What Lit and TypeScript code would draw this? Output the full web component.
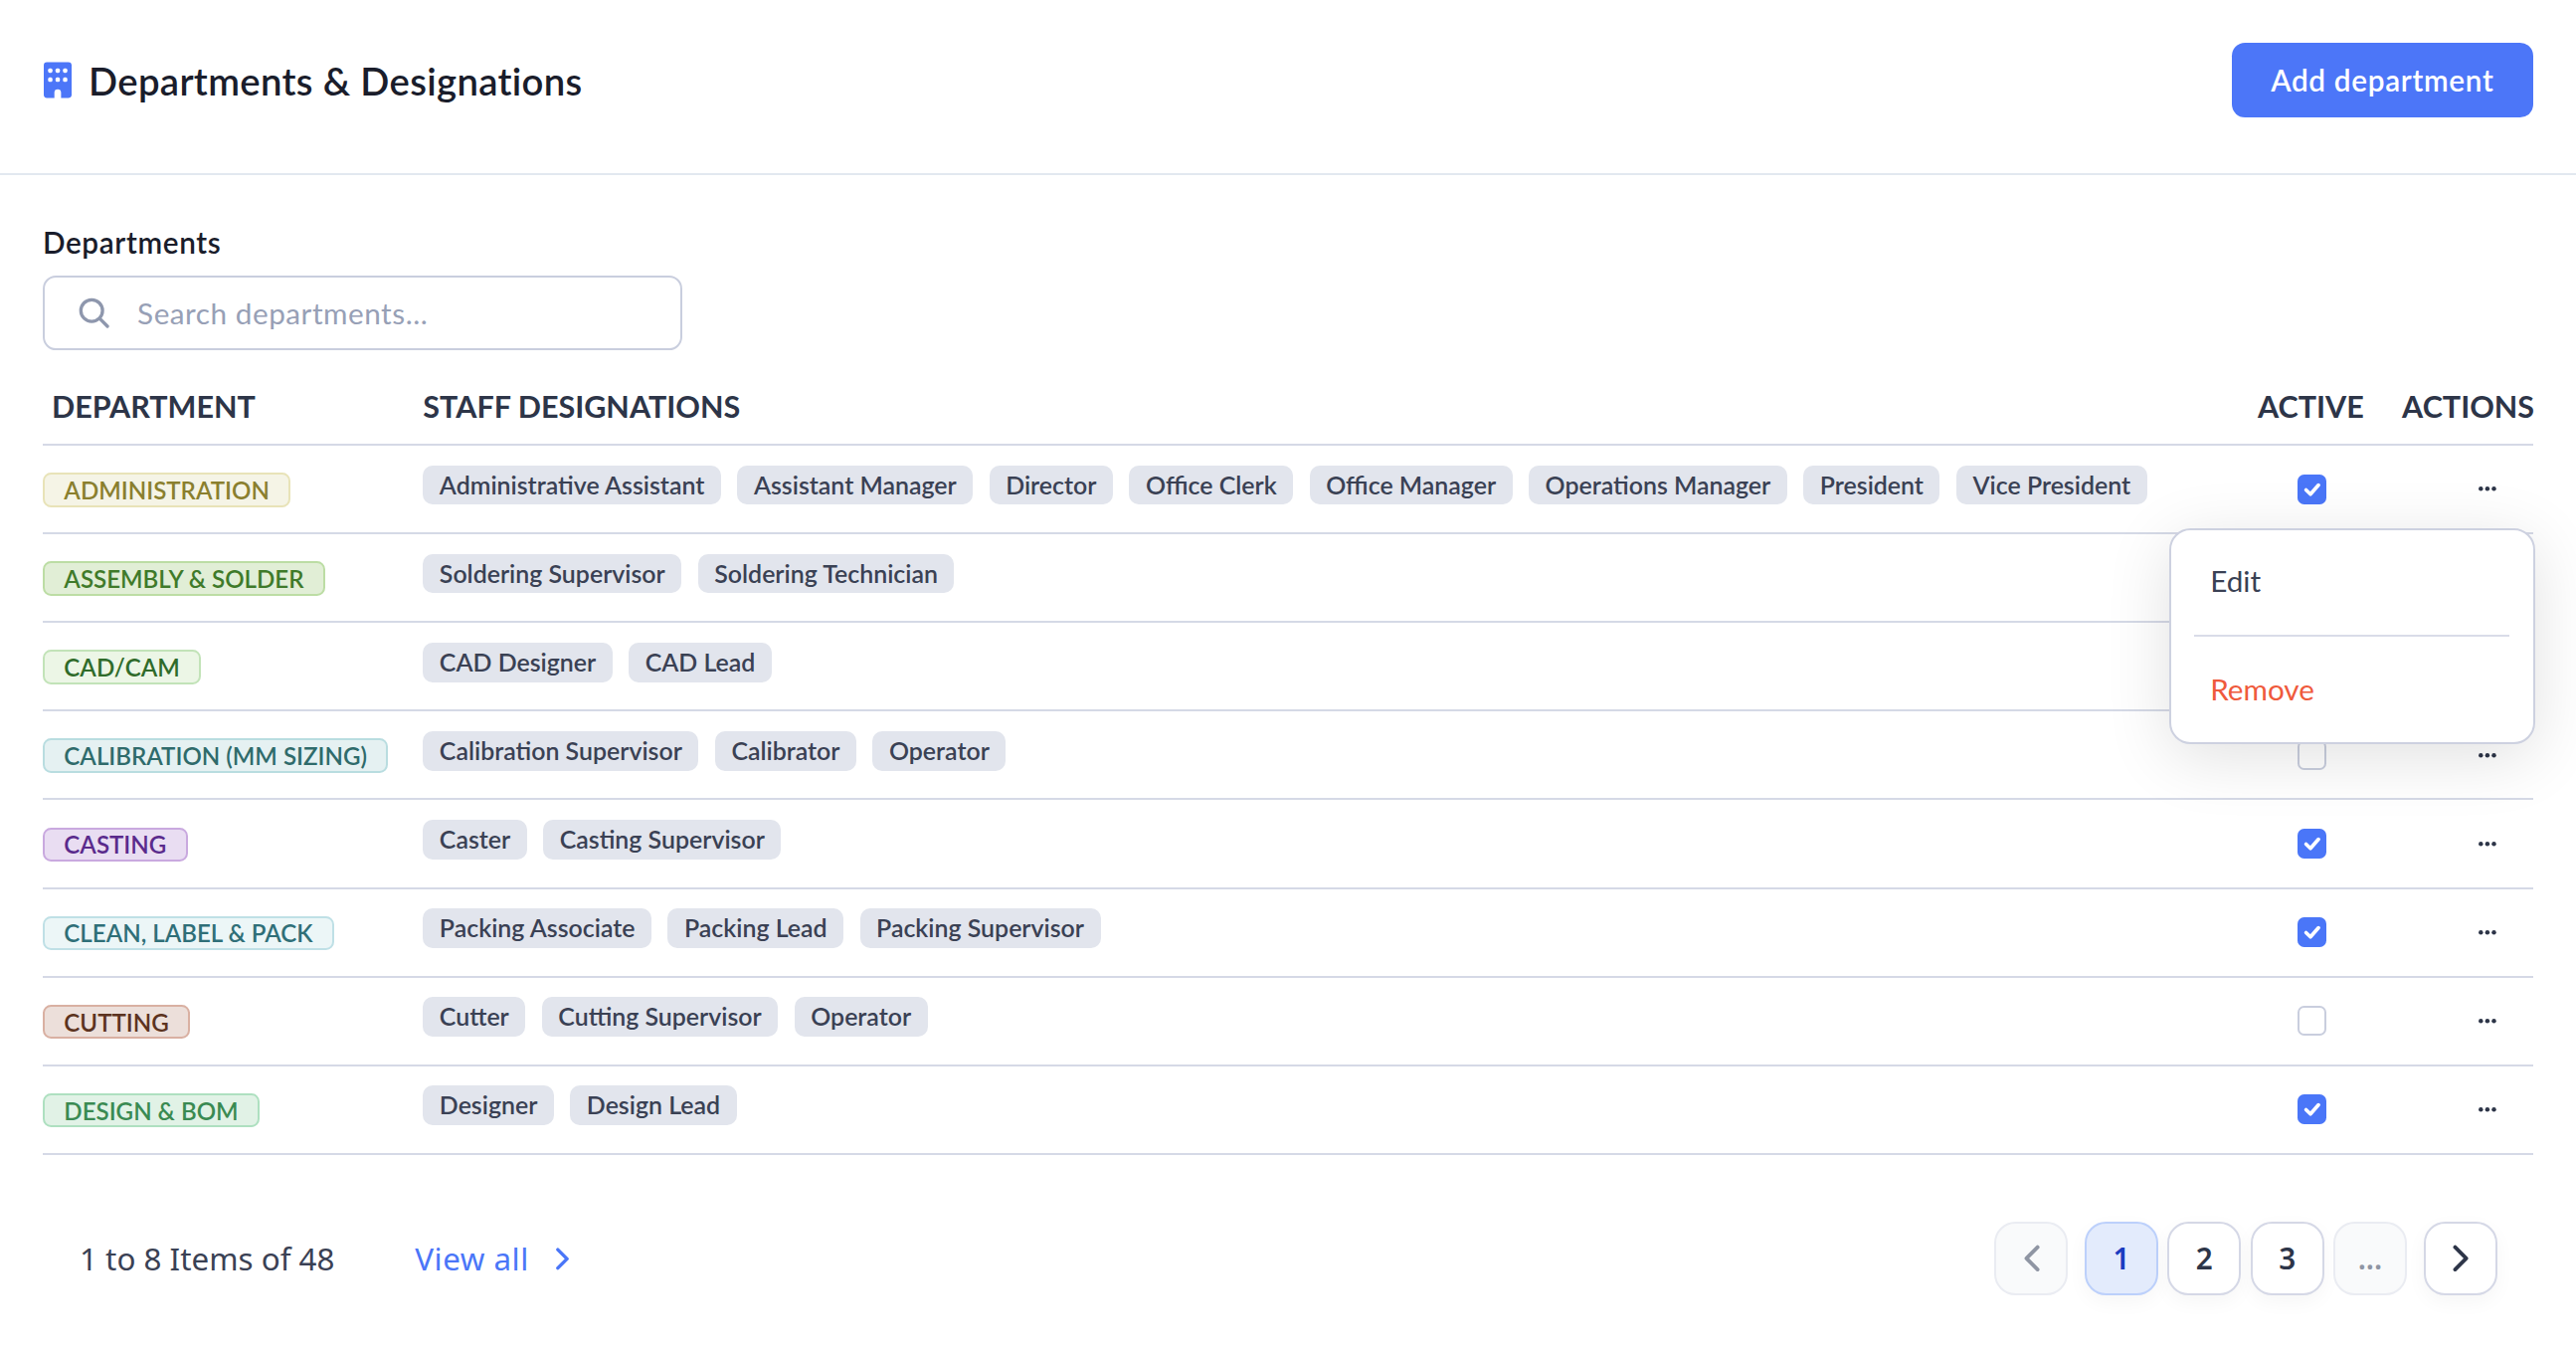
import { LitElement, css, html, nothing } from "lit";
import { customElement } from "lit/decorators.js";

interface Department {
  name: string;
  tone: string;
  staff: string[];
  active: boolean;
}

const departments: Department[] = [
  {
    name: "ADMINISTRATION",
    tone: "olive",
    active: true,
    staff: [
      "Administrative Assistant",
      "Assistant Manager",
      "Director",
      "Office Clerk",
      "Office Manager",
      "Operations Manager",
      "President",
      "Vice President",
    ],
  },
  { name: "ASSEMBLY & SOLDER", tone: "green", active: true, staff: ["Soldering Supervisor", "Soldering Technician"] },
  { name: "CAD/CAM", tone: "lime", active: true, staff: ["CAD Designer", "CAD Lead"] },
  { name: "CALIBRATION (MM SIZING)", tone: "teal", active: false, staff: ["Calibration Supervisor", "Calibrator", "Operator"] },
  { name: "CASTING", tone: "purple", active: true, staff: ["Caster", "Casting Supervisor"] },
  { name: "CLEAN, LABEL & PACK", tone: "cyan", active: true, staff: ["Packing Associate", "Packing Lead", "Packing Supervisor"] },
  { name: "CUTTING", tone: "brown", active: false, staff: ["Cutter", "Cutting Supervisor", "Operator"] },
  { name: "DESIGN & BOM", tone: "mint", active: true, staff: ["Designer", "Design Lead"] },
];

@customElement("app-root")
export class AppRoot extends LitElement {
  static styles = css`
    :host {
      display: block;
      zoom: 1.65;
      width: 1569.7px;
      height: 824px;
      background: #fff;
      color: #3a4154;
      font-family: Lato, "Noto Sans", sans-serif;
      overflow: hidden;
    }
    .top {
      height: 106.4px;
      border-bottom: 1.25px solid #e2e8f0;
      display: flex;
      align-items: center;
      justify-content: space-between;
      padding: 0 26px 7.5px 26px;
      box-sizing: border-box;
    }
    .title {
      display: flex;
      align-items: center;
      gap: 10.4px;
      padding-left: 0.6px;
      font-size: 23.2px;
      font-weight: 600;
      letter-spacing: 0.2px;
      color: #1a1d2b;
    }
    .title svg {
      width: 17px;
      height: 22.4px;
    }
    .add {
      width: 184px;
      height: 45px;
      border: 0;
      border-radius: 8px;
      background: #4c76f8;
      color: #fff;
      font: 600 18px Lato, sans-serif;
      letter-spacing: 0.42px;
    }
    .body {
      padding: 28.6px 26px 0 26px;
      position: relative;
    }
    .label {
      font-size: 18px;
      font-weight: 600;
      letter-spacing: 0.4px;
      color: #1a1d2b;
      line-height: 26px;
    }
    .search {
      margin-top: 7px;
      width: 390px;
      height: 45.4px;
      box-sizing: border-box;
      border: 1.25px solid #c9cede;
      border-radius: 8px;
      display: flex;
      align-items: center;
      gap: 17px;
      padding-left: 20.5px;
      color: #97a0b6;
      font-size: 18px;
      letter-spacing: 0.32px;
    }
    .search svg {
      width: 19px;
      height: 19px;
    }
    .grid {
      display: grid;
      grid-template-columns: 231.8px 1fr 88px 80px;
      align-items: center;
    }
    .head {
      height: 58.2px;
      padding-top: 11px;
      border-bottom: 1.25px solid #d5d9e6;
      font-size: 18.5px;
      font-weight: 700;
      color: #2d3548;
      box-sizing: border-box;
    }
    .head .first {
      padding-left: 5.5px;
    }
    .row {
      height: 54px;
      box-sizing: border-box;
      border-bottom: 1.25px solid #d5d9e6;
    }
    .row:last-of-type {
      border-bottom-color: #e2e8f0;
    }
    .pill {
      display: inline-flex;
      align-items: center;
      height: 21px;
      box-sizing: border-box;
      padding: 0 11.8px;
      border: 1.25px solid;
      border-radius: 5px;
      font-size: 14.6px;
      font-weight: 600;
      white-space: nowrap;
      position: relative;
      top: 0.5px;
    }
    .olive { color: #8a7f2e; background: #f5f4e6; border-color: #e8e3b8; }
    .green { color: #3f7a2a; background: #e1eed6; border-color: #bcdda4; }
    .lime { color: #2f6b2a; background: #ecf6e6; border-color: #c2e3b8; }
    .teal { color: #2f6b6b; background: #e5f1f2; border-color: #b9dde0; }
    .purple { color: #5a2a8c; background: #e9ddf2; border-color: #c9a9df; }
    .cyan { color: #2f6f78; background: #ecf6f7; border-color: #bfe0e6; }
    .brown { color: #5c3320; background: #ecdfda; border-color: #d9b0a2; }
    .mint { color: #3a8a52; background: #e1f2e6; border-color: #aee0c0; }
    .tags {
      display: flex;
      gap: 10px;
      padding-bottom: 5px;
    }
    .tag {
      height: 24px;
      line-height: 23.6px;
      padding: 0 10px;
      border-radius: 6px;
      background: #e2e5ed;
      color: #3a4154;
      font-size: 15.1px;
      font-weight: 600;
      white-space: nowrap;
    }
    .check-cell {
      width: 66px;
      display: flex;
      justify-content: center;
    }
    .check {
      width: 18px;
      height: 18px;
      box-sizing: border-box;
      border-radius: 4px;
      border: 1.25px solid #c9cede;
      background: #fff;
      display: flex;
    }
    .check.on {
      background: #4a76f8;
      border: 0;
    }
    .check svg {
      width: 100%;
      height: 100%;
    }
    .dots {
      display: flex;
      justify-content: flex-end;
      padding-right: 22px;
    }
    .dots svg {
      width: 12px;
      height: 4px;
    }
    .menu {
      position: absolute;
      left: 1321.6px;
      top: 215.4px;
      width: 223px;
      height: 131.6px;
      box-sizing: border-box;
      background: #fff;
      border: 1.25px solid #cdd1e0;
      border-radius: 13px;
      box-shadow: 0 8px 40px rgba(0, 0, 0, 0.12);
      font-size: 18px;
      padding: 0 14px;
    }
    .menu div {
      display: flex;
      align-items: center;
      padding-left: 10px;
    }
    .menu .edit {
      height: 65px;
      padding-bottom: 2px;
      box-sizing: border-box;
      border-bottom: 1.25px solid #d9dce8;
    }
    .menu .remove {
      height: 63px;
      color: #ef5a3c;
    }
    .foot {
      margin-top: 40.4px;
      display: flex;
      align-items: center;
      padding: 0 48px 0 48.5px;
      font-family: "Noto Sans", sans-serif;
      font-size: 19px;
    }
    .view {
      margin-left: 49px;
      display: flex;
      align-items: center;
      gap: 16px;
      color: #4a76f8;
      letter-spacing: 0.3px;
    }
    .view svg {
      width: 9.5px;
      height: 15px;
      stroke-width: 2.4;
    }
    .pages {
      margin-left: auto;
      display: flex;
      gap: 5.5px;
    }
    .page {
      width: 45px;
      height: 45.4px;
      box-sizing: border-box;
      display: flex;
      align-items: center;
      justify-content: center;
      border: 1.25px solid #d5d8e6;
      border-radius: 13px;
      color: #2d3548;
      font-size: 18px;
      font-weight: 600;
      background: #fff;
      box-shadow: 0 4px 12px rgba(0, 0, 0, 0.04);
    }
    .page svg {
      width: 11.5px;
      height: 18px;
      stroke-width: 2.2;
      margin-left: 1px;
    }
    .page.active {
      background: #e3ebfc;
      border-color: #bcd0fb;
      color: #1a3cc0;
    }
    .page.off {
      background: #f9fafb;
      border-color: #eaecf2;
      color: #8f95a3;
      box-shadow: none;
    }
    .page.first {
      margin-right: 4.5px;
    }
    .page.last {
      margin-left: 4.5px;
    }
  `;

  private chevron(points: string) {
    return html`<svg viewBox="0 0 11 17" fill="none" stroke="currentColor" stroke-linecap="round" stroke-linejoin="round">
      <polyline points=${points}></polyline>
    </svg>`;
  }

  private renderRow(d: Department) {
    return html`
      <div class="grid row">
        <div><span class="pill ${d.tone}">${d.name}</span></div>
        <div class="tags">${d.staff.map((s) => html`<span class="tag">${s}</span>`)}</div>
        <div class="check-cell">
          <span class="check ${d.active ? "on" : ""}">
            ${d.active
              ? html`<svg viewBox="0 0 18 18" fill="none" stroke="#fff" stroke-width="2.2" stroke-linecap="round" stroke-linejoin="round"><polyline points="5.2,9.4 7.9,12 12.8,6.4"></polyline></svg>`
              : nothing}
          </span>
        </div>
        <div class="dots">
          <svg viewBox="0 0 12 4" fill="#2d3548"><circle cx="2" cy="2" r="1.35"></circle><circle cx="6" cy="2" r="1.35"></circle><circle cx="10" cy="2" r="1.35"></circle></svg>
        </div>
      </div>
    `;
  }

  render() {
    return html`
      <div class="top">
        <div class="title">
          <svg viewBox="0 0 18 23">
            <path fill="#4c76f8" d="M2 0h14a2 2 0 0 1 2 2v19a2 2 0 0 1-2 2h-4.85v-3.45a2.15 2.15 0 0 0-4.3 0V23H2a2 2 0 0 1-2-2V2a2 2 0 0 1 2-2z"></path>
            <g fill="#fff">
              <rect x="2.8" y="4" width="2.8" height="2.8" rx="1"></rect>
              <rect x="7.6" y="4" width="2.8" height="2.8" rx="1"></rect>
              <rect x="12.4" y="4" width="2.8" height="2.8" rx="1"></rect>
              <rect x="2.8" y="9.8" width="2.8" height="2.8" rx="1"></rect>
              <rect x="7.6" y="9.8" width="2.8" height="2.8" rx="1"></rect>
              <rect x="12.4" y="9.8" width="2.8" height="2.8" rx="1"></rect>
            </g>
          </svg>
          Departments &amp; Designations
        </div>
        <button class="add">Add department</button>
      </div>
      <div class="body">
        <div class="label">Departments</div>
        <div class="search">
          <svg viewBox="0 0 19 19" fill="none" stroke="#8e97ad" stroke-width="2" stroke-linecap="round">
            <circle cx="8" cy="8" r="6.6"></circle>
            <line x1="13" y1="13" x2="17.6" y2="17.6"></line>
          </svg>
          Search departments...
        </div>
        <div class="grid head">
          <div class="first">DEPARTMENT</div>
          <div>STAFF DESIGNATIONS</div>
          <div>ACTIVE</div>
          <div>ACTIONS</div>
        </div>
        ${departments.map((d) => this.renderRow(d))}
        <div class="menu">
          <div class="edit">Edit</div>
          <div class="remove">Remove</div>
        </div>
      </div>
      <div class="foot">
        <span>1 to 8 Items of 48</span>
        <span class="view">View all ${this.chevron("2,2 8.5,8.5 2,15")}</span>
        <div class="pages">
          <span class="page off first">${this.chevron("8.5,2 2,8.5 8.5,15")}</span>
          <span class="page active">1</span>
          <span class="page">2</span>
          <span class="page">3</span>
          <span class="page off">...</span>
          <span class="page last">${this.chevron("2,2 8.5,8.5 2,15")}</span>
        </div>
      </div>
    `;
  }
}
